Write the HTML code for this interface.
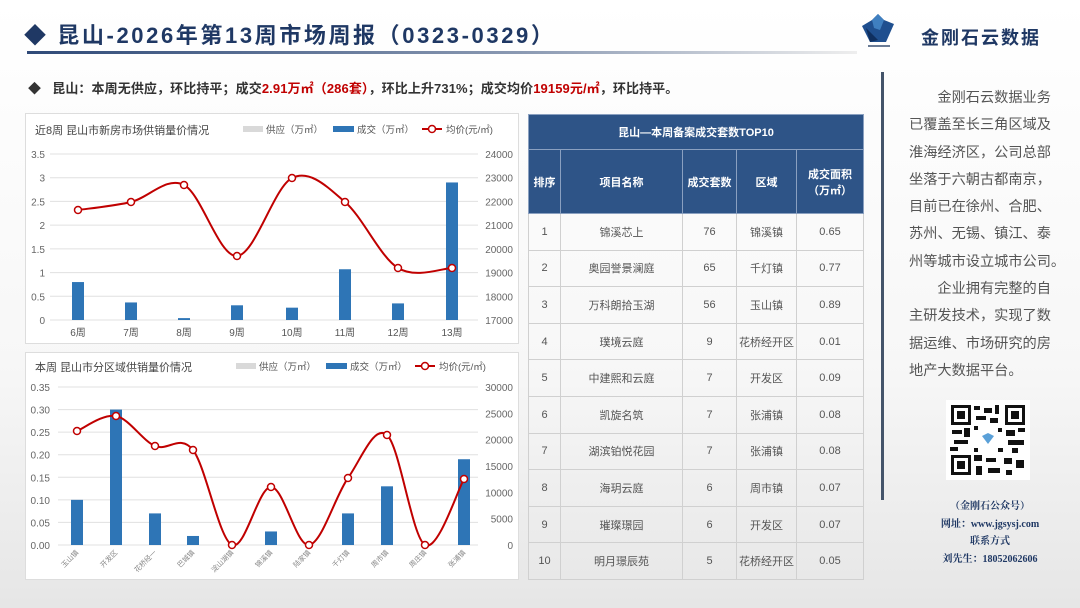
<!DOCTYPE html>
<html><head><meta charset="utf-8">
<style>
*{margin:0;padding:0;box-sizing:border-box}
body{width:1080px;height:608px;overflow:hidden;position:relative;font-family:"Liberation Sans","Noto Sans CJK SC",sans-serif;background:linear-gradient(180deg,#ffffff 0%,#f7f7f7 60%,#e6e6e6 100%)}
.abs{position:absolute}
.title{left:24px;top:18px;font-size:22px;color:#1f3864;letter-spacing:2.6px;font-weight:bold;white-space:nowrap}
.hr{left:27px;top:51px;width:830px;height:3px;background:linear-gradient(90deg,#2f4a78 0%,#8b9ab3 60%,#eeeeee 100%)}
.sum{left:28px;top:78px;font-size:13px;letter-spacing:0.1px;font-weight:bold;color:#333;white-space:nowrap}
.red{color:#c00000}
.box{background:#fff;border:1px solid #ddd}
table{border-collapse:collapse;position:absolute;left:528px;top:114px;width:336px;font-size:11px;color:#555;text-align:center}
td{border:1px solid #d0d0d0;height:36.6px}
.h td{background:#2e5487;color:#fff;font-weight:bold;border-color:#8aa0c0}
.side{left:909px;top:85px;width:150px;font-size:14.2px;color:#555;line-height:27.3px;white-space:nowrap}
.contact{left:900px;top:498px;width:180px;text-align:center;font-size:10px;font-weight:bold;color:#1f3864;line-height:17.5px;font-family:"Liberation Serif","Noto Serif CJK SC",serif}
</style></head><body>
<div class="abs title">◆ 昆山-2026年第13周市场周报（0323-0329）</div>
<div class="abs hr"></div>
<div class="abs sum">◆&nbsp;&nbsp;&nbsp;昆山：本周无供应，环比持平；成交<span class="red">2.91万㎡（286套）</span>，环比上升731%；成交均价<span class="red">19159元/㎡</span>，环比持平。</div>

<svg class="abs" style="left:858px;top:12px" width="40" height="40" viewBox="0 0 40 40">
<polygon points="4,14 14,8 20,2 26,8 36,12 28,30 12,30" fill="#1f4f8f"/>
<polygon points="14,8 20,2 26,8 22,18 16,16" fill="#3f7fc0"/>
<polygon points="8,16 20,28 12,30" fill="#0f2f5f"/>
<rect x="10" y="33" width="22" height="2" fill="#6a7b95"/>
</svg>
<div class="abs" style="left:921px;top:24px;font-size:18px;font-weight:bold;color:#1f3864;letter-spacing:2px">金刚石云数据</div>
<div class="abs" style="left:881px;top:72px;width:3px;height:428px;background:#44546a"></div>

<div class="abs box" style="left:25px;top:113px;width:494px;height:231px"></div>
<div class="abs box" style="left:25px;top:352px;width:494px;height:228px"></div>
<svg class="abs" style="left:0;top:0" width="520" height="590" id="ch" font-family="Liberation Sans, Noto Sans CJK SC, sans-serif"></svg>

<table>
<tr class="h"><td colspan="5" style="height:35px">昆山—本周备案成交套数TOP10</td></tr>
<tr class="h"><td style="width:32px;height:64px">排序</td><td style="width:122px">项目名称</td><td style="width:54px">成交套数</td><td style="width:60px">区域</td><td>成交面积<br>（万㎡）</td></tr>
<tr><td>1</td><td>锦溪芯上</td><td>76</td><td>锦溪镇</td><td>0.65</td></tr>
<tr><td>2</td><td>奥园誉景澜庭</td><td>65</td><td>千灯镇</td><td>0.77</td></tr>
<tr><td>3</td><td>万科朗拾玉湖</td><td>56</td><td>玉山镇</td><td>0.89</td></tr>
<tr><td>4</td><td>璞境云庭</td><td>9</td><td>花桥经开区</td><td>0.01</td></tr>
<tr><td>5</td><td>中建熙和云庭</td><td>7</td><td>开发区</td><td>0.09</td></tr>
<tr><td>6</td><td>凯旋名筑</td><td>7</td><td>张浦镇</td><td>0.08</td></tr>
<tr><td>7</td><td>湖滨铂悦花园</td><td>7</td><td>张浦镇</td><td>0.08</td></tr>
<tr><td>8</td><td>海玥云庭</td><td>6</td><td>周市镇</td><td>0.07</td></tr>
<tr><td>9</td><td>璀璨璟园</td><td>6</td><td>开发区</td><td>0.07</td></tr>
<tr><td>10</td><td>明月璟辰苑</td><td>5</td><td>花桥经开区</td><td>0.05</td></tr>
</table>

<div class="abs side">　　金刚石云数据业务<br>已覆盖至长三角区域及<br>淮海经济区，公司总部<br>坐落于六朝古都南京，<br>目前已在徐州、合肥、<br>苏州、无锡、镇江、泰<br>州等城市设立城市公司。<br>　　企业拥有完整的自<br>主研发技术，实现了数<br>据运维、市场研究的房<br>地产大数据平台。</div>

<svg class="abs" style="left:946px;top:400px" width="84" height="80" viewBox="0 0 84 80">
<rect width="84" height="80" fill="#fff"/>
<g fill="#111">
<rect x="5" y="5" width="20" height="20"/><rect x="59" y="5" width="20" height="20"/><rect x="5" y="55" width="20" height="20"/>
</g>
<g fill="#fff"><rect x="8" y="8" width="14" height="14"/><rect x="62" y="8" width="14" height="14"/><rect x="8" y="58" width="14" height="14"/></g>
<g fill="#111"><rect x="11" y="11" width="8" height="8"/><rect x="65" y="11" width="8" height="8"/><rect x="11" y="61" width="8" height="8"/>
<rect x="28" y="6" width="6" height="4"/><rect x="38" y="8" width="8" height="5"/><rect x="49" y="5" width="4" height="9"/><rect x="30" y="16" width="10" height="4"/><rect x="44" y="18" width="8" height="5"/>
<rect x="6" y="30" width="10" height="4"/><rect x="18" y="28" width="6" height="9"/><rect x="8" y="40" width="14" height="4"/><rect x="4" y="47" width="8" height="4"/>
<rect x="60" y="30" width="9" height="6"/><rect x="72" y="28" width="7" height="4"/><rect x="62" y="40" width="16" height="5"/><rect x="66" y="48" width="6" height="5"/>
<rect x="28" y="55" width="8" height="6"/><rect x="40" y="58" width="10" height="4"/><rect x="30" y="66" width="6" height="9"/><rect x="42" y="68" width="12" height="5"/>
<rect x="58" y="58" width="8" height="6"/><rect x="70" y="60" width="8" height="8"/><rect x="60" y="70" width="6" height="5"/><rect x="28" y="26" width="4" height="4"/><rect x="52" y="28" width="4" height="4"/><rect x="28" y="48" width="4" height="4"/><rect x="52" y="48" width="5" height="4"/></g>
<rect x="33" y="30" width="18" height="18" fill="#fff"/><polygon points="36,36 42,33 48,36 42,44" fill="#5aa0d8"/>
</svg>
<div class="abs contact">（金刚石公众号）<br>网址：www.jgsysj.com<br>联系方式<br>刘先生：18052062606</div>

<script>
const s=document.getElementById('ch');let h='';
function sm(p){let d='M'+p[0][0]+','+p[0][1];for(let i=0;i<p.length-1;i++){const p0=p[i-1]||p[i],p1=p[i],p2=p[i+1],p3=p[i+2]||p2;const t=6;d+=` C${p1[0]+(p2[0]-p0[0])/t},${p1[1]+(p2[1]-p0[1])/t} ${p2[0]-(p3[0]-p1[0])/t},${p2[1]-(p3[1]-p1[1])/t} ${p2[0]},${p2[1]}`;}return d;}
function chart(o){
 const{top,bot,L,R,ll,rl,xs,bars,ys,title,lx,cats,rot,bmax}=o;
 h+=`<text x="35" y="${o.ty}" font-size="11" fill="#444">${title}</text>`;
 const lg=o.ty-4,g=o.lg;
 h+=`<rect x="${g}" y="${lg-4}" width="20" height="6" fill="#d9d9d9"/><text x="${g+23}" y="${lg+3}" font-size="9.5" fill="#555">供应（万㎡）</text>`;
 h+=`<rect x="${g+90}" y="${lg-4}" width="21" height="6" fill="#2e75b6"/><text x="${g+114}" y="${lg+3}" font-size="9.5" fill="#555">成交（万㎡）</text>`;
 h+=`<line x1="${g+179}" y1="${lg-1}" x2="${g+199}" y2="${lg-1}" stroke="#c00000" stroke-width="2"/><circle cx="${g+189}" cy="${lg-1}" r="3.5" fill="#fff" stroke="#c00000" stroke-width="1.5"/><text x="${g+203}" y="${lg+3}" font-size="9.5" fill="#555">均价(元/㎡)</text>`;
 const n=ll.length;for(let i=0;i<n;i++){const y=bot-(bot-top)*i/(n-1);h+=`<line x1="${L}" y1="${y}" x2="${R}" y2="${y}" stroke="#e0e0e0"/><text x="${lx}" y="${y+4}" font-size="10" fill="#666" text-anchor="end">${ll[i]}</text>`;}
 const m=rl.length;for(let i=0;i<m;i++){const y=bot-(bot-top)*i/(m-1);h+=`<text x="${R+35}" y="${y+4}" font-size="10" fill="#666" text-anchor="end">${rl[i]}</text>`;}
 xs.forEach((x,i)=>{const bh=(bot-top)*bars[i]/bmax;h+=`<rect x="${x-6}" y="${bot-bh}" width="12" height="${bh}" fill="#2e75b6"/>`;
  if(rot)h+=`<text transform="translate(${x+2},${bot+8}) rotate(-45)" font-size="7" fill="#888" text-anchor="end">${cats[i]}</text>`;else h+=`<text x="${x}" y="${bot+16}" font-size="10" fill="#555" text-anchor="middle">${cats[i]}</text>`;});
 const pts=xs.map((x,i)=>[x,ys[i]]);h+=`<path d="${sm(pts)}" fill="none" stroke="#c00000" stroke-width="2"/>`;
 pts.forEach(p=>h+=`<circle cx="${p[0]}" cy="${p[1]}" r="3.5" fill="#fff" stroke="#c00000" stroke-width="1.5"/>`);
}
chart({top:154,bot:320,L:50,R:478,lx:45,ty:134,lg:243,title:'近8周  昆山市新房市场供销量价情况',ll:['0','0.5','1','1.5','2','2.5','3','3.5'],rl:['17000','18000','19000','20000','21000','22000','23000','24000'],
 xs:[78,131,184,237,292,345,398,452],bars:[0.8,0.37,0.04,0.31,0.26,1.07,0.35,2.9],bmax:3.5,ys:[210,202,185,256,178,202,268,268],cats:['6周','7周','8周','9周','10周','11周','12周','13周']});
chart({top:387,bot:545,L:58,R:478,lx:50,ty:371,lg:236,title:'本周  昆山市分区域供销量价情况',ll:['0.00','0.05','0.10','0.15','0.20','0.25','0.30','0.35'],rl:['0','5000','10000','15000','20000','25000','30000'],
 xs:[77,116,155,193,232,271,309,348,387,425,464],bars:[.10,.30,.07,.02,0,.03,0,.07,.13,0,.19],bmax:.35,ys:[431,416,446,450,545,487,545,478,435,545,479],cats:['玉山镇','开发区','花桥经一','巴城镇','淀山湖镇','锦溪镇','陆家镇','千灯镇','周市镇','周庄镇','张浦镇'],rot:1});
s.innerHTML=h;
</script>
</body></html>
